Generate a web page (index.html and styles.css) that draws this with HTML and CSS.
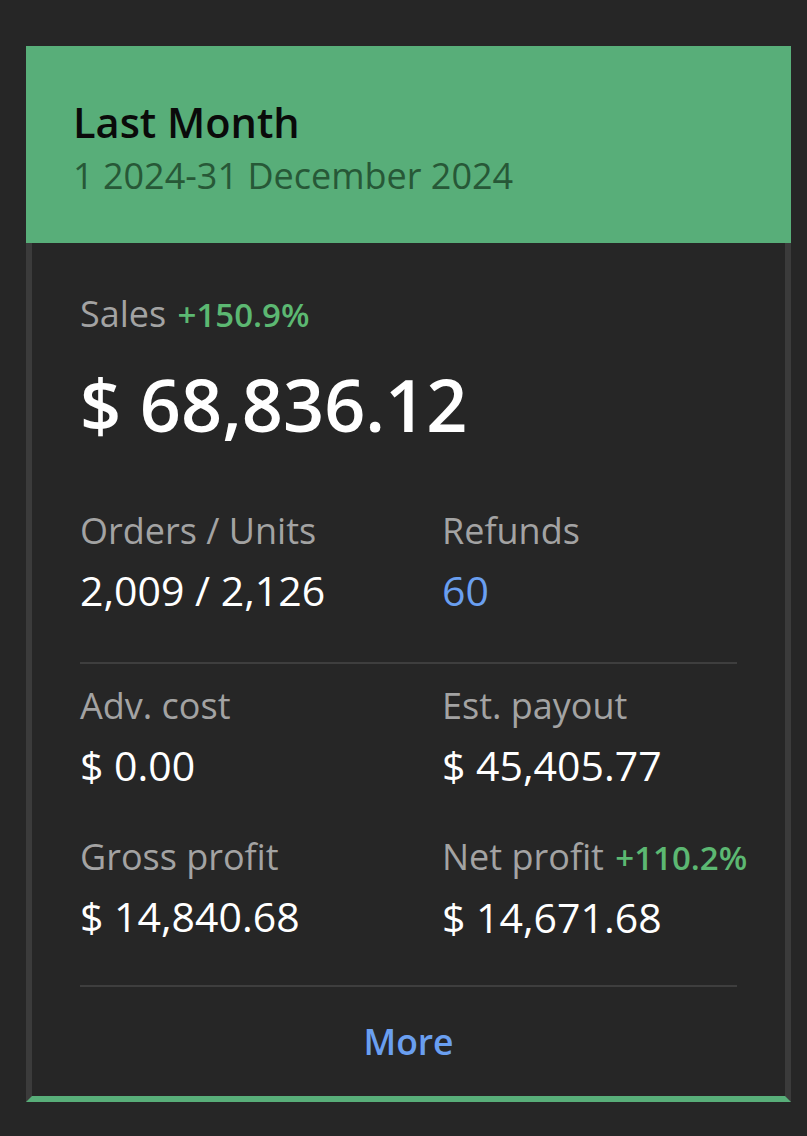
FILE: index.html
```html
<!DOCTYPE html>
<html>
<head>
<meta charset="utf-8">
<link rel="stylesheet" href="styles.css">
</head>
<body>
<div class="card">
  <div class="card-head">
    <div class="title">Last Month</div>
    <div class="date">1 2024-31 December 2024</div>
  </div>
  <div class="card-body">
    <div class="label">Sales <span class="pct">+150.9%</span></div>
    <div class="big">$ 68,836.12</div>
    <div class="grid first">
      <div class="cell">
        <div class="label">Orders / Units</div>
        <div class="value">2,009 / 2,126</div>
      </div>
      <div class="cell">
        <div class="label">Refunds</div>
        <div class="value blue">60</div>
      </div>
    </div>
    <div class="divider"></div>
    <div class="grid second">
      <div class="cell">
        <div class="label">Adv. cost</div>
        <div class="value">$ 0.00</div>
      </div>
      <div class="cell">
        <div class="label">Est. payout</div>
        <div class="value">$ 45,405.77</div>
      </div>
      <div class="cell">
        <div class="label">Gross profit</div>
        <div class="value">$ 14,840.68</div>
      </div>
      <div class="cell">
        <div class="label">Net profit <span class="pct">+110.2%</span></div>
        <div class="value">$ 14,671.68</div>
      </div>
    </div>
    <div class="divider low"></div>
    <div class="more">More</div>
  </div>
</div>
</body>
</html>
```
FILE: styles.css
```css
html, body {
  margin: 0;
  padding: 0;
  background: #262626;
}
body {
  font-family: "Open Sans", "Noto Sans", sans-serif;
  padding: 46px 16px 0 26px;
}
.card {
  width: 765px;
}
.card-head {
  background: #58ae79;
  padding: 48px 47px 41px 47px;
}
.title {
  font-size: 41.5px;
  font-weight: 600;
  line-height: 56px;
  color: #0a0a0a;
}
.date {
  font-size: 36px;
  line-height: 52px;
  color: #275837;
}
.card-body {
  border-left: 6px solid #3b3b3b;
  border-right: 6px solid #3b3b3b;
  border-bottom: 6px solid #58ae79;
  padding: 47px 48px 29px 48px;
}
.label {
  font-size: 36px;
  line-height: 48px;
  color: #a3a3a3;
  white-space: nowrap;
}
.pct {
  font-size: 33px;
  font-weight: 600;
  color: #5cb872;
  margin-left: 2px;
}
.big {
  font-size: 72px;
  font-weight: 600;
  line-height: 90px;
  color: #ffffff;
  margin-top: 20px;
}
.grid {
  display: grid;
  grid-template-columns: 362px 1fr;
}
.grid.first {
  margin-top: 58px;
}
.grid.second {
  margin-top: 18px;
  row-gap: 42px;
}
.value {
  font-size: 41px;
  line-height: 52px;
  color: #ffffff;
  margin-top: 9px;
}
.value.blue {
  color: #6a9ff0;
}
.divider {
  height: 2px;
  background: #3e3e3e;
  margin-top: 46px;
}
.divider.low {
  margin-top: 42px;
}
.more {
  margin-top: 28px;
  text-align: center;
  font-size: 35.5px;
  font-weight: 600;
  line-height: 52px;
  color: #6a9ff0;
}
```
